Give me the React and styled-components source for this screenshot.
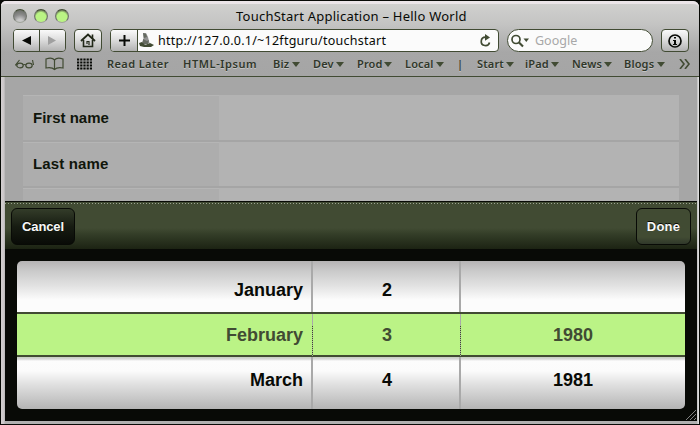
import React from 'react';
import styled, { createGlobalStyle } from 'styled-components';

const ink = '#414b33';
const black = '#080a06';
const lucida = '"Noto Sans", "Open Sans", sans-serif';

const GlobalStyle = createGlobalStyle`
  * { box-sizing: border-box; }
  body { margin: 0; overflow: hidden; background: #000; }
`;

const Frame = styled.div`
  width: 700px;
  height: 425px;
  padding: 1px;
  background: ${black};
`;

const Window = styled.div`
  height: 423px;
  width: 698px;
  padding: 0 1px 3px 4px;
  border-radius: 5px 6px 0 0;
  background: linear-gradient(90deg, #d3cfd0 0, #cac6c8 3px, #b0b0b0 4px, #b0b0b0 696px, #dcdcdc 697px);
  display: flex;
  flex-direction: column;
`;

const Chrome = styled.div`
  height: 76px;
  flex: none;
  margin-left: -4px;
  padding-left: 4px;
  margin-right: -1px;
  border-top: 3px solid #ebe5e8;
  border-bottom: 1px solid ${ink};
  border-radius: 5px 6px 0 0;
  background: linear-gradient(#d0d0ce, #c4c4c3 20px, #a7a7a7 48px, #a5a5a5);
  display: flex;
  flex-direction: column;
`;

const TitleBar = styled.div`
  height: 25px;
  flex: none;
  display: grid;
  grid-template-columns: 231px 232px 1fr;
  align-items: center;
`;

const Lights = styled.div`
  display: flex;
  gap: 7px;
  padding: 0 0 1px 8px;
`;

const Light = styled.i`
  width: 14px;
  height: 14px;
  border-radius: 50%;
  border: 1.5px solid;
  border-color: ${ink} #70746c #a0a59b;
  background: ${p => p.$off
    ? 'radial-gradient(circle at 50% 100%, #c8c8c8 20%, #8b8b8b 55%, #62665e)'
    : 'radial-gradient(circle at 50% 62%, #baf484 52%, #6c7e58 75%)'};
`;

const Title = styled.div`
  font: 13px ${lucida};
  letter-spacing: ${p => p.$track}px;
  color: ${black};
  white-space: nowrap;
  line-height: 18px;
  padding-bottom: 2px;
`;

const ToolRow = styled.div`
  height: 23px;
  flex: none;
  display: flex;
  align-items: flex-start;
  padding-left: 8px;
`;

const Control = styled.div`
  height: 23px;
  width: ${p => p.$w}px;
  margin-right: ${p => p.$gap}px;
  border: 1px solid ${ink};
  border-radius: ${p => p.$pill ? 12 : 4}px;
  background: ${p => p.$field ? '#fbfbfb' : 'linear-gradient(#fafafa, #dedede 45%, #b2b2b2)'};
  display: flex;
  align-items: center;
  justify-content: ${p => p.$field ? 'flex-start' : 'center'};
  overflow: hidden;
`;

const Segment = styled.div`
  width: ${p => p.$w}px;
  height: 21px;
  flex: none;
  display: flex;
  align-items: center;
  justify-content: center;
  background: linear-gradient(#fafafa, #dedede 45%, #b2b2b2);
  border-right: ${p => p.$divide ? 1 : 0}px solid ${ink};
`;

const FieldText = styled.div`
  font: 12.5px/20px ${lucida};
  letter-spacing: ${p => p.$track}px;
  color: ${p => p.$muted ? '#a8a8a8' : black};
  white-space: nowrap;
  flex: 1;
  padding-left: ${p => p.$pad}px;
`;

const Bookmarks = styled.div`
  height: 24px;
  flex: none;
  display: flex;
  align-items: center;
  padding-left: 9px;
  svg { flex: none; }
`;

const Bookmark = styled.div`
  width: ${p => p.$w}px;
  flex: none;
  display: flex;
  align-items: center;
  gap: 2px;
  white-space: nowrap;
  font: 600 11px/16px ${lucida};
  letter-spacing: ${p => p.$track || 0}px;
  color: #30372a;
  text-shadow: 0 1px #c4c4c4;
`;

const Label = styled.span`
  width: ${p => p.$w}px;
  flex: none;
`;

const Page = styled.div`
  width: 692px;
  height: 124px;
  flex: none;
  padding: 18px 18px 0;
  background: #a6a6a6;
  overflow: hidden;
`;

const FormRow = styled.div`
  height: ${p => p.$first ? 47 : 46}px;
  border-bottom: 2px solid #a5a5a5;
  display: grid;
  grid-template-columns: 196px 1fr;
  background: #b3b3b3;
`;

const FormLabel = styled.div`
  padding-left: 10px;
  background: #adadad;
  border-top: 1px solid #b5b5b5;
  color: #10160b;
  font: bold 15px/${p => p.$first ? 44 : 42}px "Liberation Sans", Arial, sans-serif;
  letter-spacing: ${p => p.$first ? 0 : 0.15}px;
`;

const Sheet = styled.div`
  width: 692px;
  height: 220px;
  flex: none;
  background: ${black};
`;

const SheetBar = styled.div`
  height: 48px;
  display: flex;
  justify-content: space-between;
  padding: 5px 6px 0;
  border-top: 1px solid ${black};
  background:
    repeating-linear-gradient(90deg, #9ba391 0 1px, ${ink} 1px 3px) 0 1px / 100% 1px no-repeat,
    linear-gradient(${ink} 26px, #343e28 32px, #1c2313);
`;

const SheetButton = styled.div`
  width: ${p => p.$w}px;
  height: 37px;
  margin-top: 1px;
  border: 1px solid ${black};
  border-radius: 6px;
  background: ${p => p.$primary
    ? `linear-gradient(${ink} 28px, #30382a)`
    : 'linear-gradient(#333c29, #171c12 50%, #090b07)'};
  color: #f8f8f8;
  text-align: center;
  font: bold 13px/36px "Liberation Sans", Arial, sans-serif;
  letter-spacing: ${p => p.$primary ? 0.2 : -0.1}px;
  text-shadow: 0 -1px ${black};
`;

const Picker = styled.div`
  height: 148px;
  margin: 12px 12px 0;
  border-radius: 5px;
  overflow: hidden;
  display: grid;
  grid-template-rows: 51px 45px 52px;
`;

const PickerRow = styled.div`
  display: grid;
  grid-template-columns: 296px 148px 1fr;
  color: ${p => p.$active ? ink : black};
  border: solid ${ink};
  border-width: ${p => p.$active ? '2px 0' : 0};
  background: ${p => ({
    top: 'linear-gradient(#b5b3b4, #cacaca 10px, #e2e2e2 25px, #fcfcfc 39px)',
    middle: '#bbf386',
    bottom: 'linear-gradient(#c6cec0 0, #d7d7d7 2px, #fcfcfc 4px, #fbfbfb 14px, #e1e1e1 27px, #cacaca 40px, #b4b4b4)',
  })[p.$tone]};
`;

const PickerCell = styled.div`
  font: bold 18px/${p => p.$line}px "Liberation Sans", Arial, sans-serif;
  text-align: ${p => p.$right ? 'right' : 'center'};
  padding-right: ${p => p.$right ? 10 : 0}px;
  background: ${p => ({
    0: 'none',
    1: `linear-gradient(#a9a9a9, #a9a9a9) 100% 0 / 1px 11px no-repeat,
        repeating-linear-gradient(${ink} 0 1px, #a9b99a 1px 2px) 100% 0 / 1px 100% no-repeat`,
    2: 'linear-gradient(#a9a9a9, #a9a9a9) 100% 0 / 2px 100% no-repeat',
  })[p.$rule]};
`;

const ResizeGrip = styled.div`
  height: 12px;
  display: flex;
  justify-content: flex-end;
`;

const Chevron = () => (
  <svg width="8" height="5" viewBox="0 0 8 5"><path d="M0 0h8L4 5z" fill={ink} /></svg>
);

const menus = [
  ['Biz', 40, 17], ['Dev', 44, 21], ['Prod', 48, 25], ['Local', 52, 29], ['|', 20, 3],
  ['Start', 48, 27], ['iPad', 47, 24], ['News', 52, 30], ['Blogs', 55, 31],
];

const rows = [
  ['top', 'January', '2', '', 58],
  ['middle', 'February', '3', '1980', 42],
  ['bottom', 'March', '4', '1981', 46],
];

export default function App() {
  return (
    <Frame>
      <GlobalStyle />
      <Window>
        <Chrome>
          <TitleBar>
            <Lights><Light $off /><Light /><Light /></Lights>
            <Title $track={0.24}>TouchStart Application – Hello World</Title>
          </TitleBar>
          <ToolRow>
            <Control $w={53} $gap={8}>
              <Segment $w={26} $divide>
                <svg width="10" height="9" viewBox="0 0 10 9"><path d="M9 0v9L0 4.5z" fill={black} /></svg>
              </Segment>
              <Segment $w={25}>
                <svg width="9" height="9" viewBox="0 0 9 9"><path d="M0 0v9l8-4.5z" fill="#a0a0a0" /></svg>
              </Segment>
            </Control>
            <Control $w={28} $gap={8}>
              <svg width="16" height="15" viewBox="0 0 16 15" fill="none" stroke="#222819">
                <path d="M1 8l7-6.5L15 8" strokeWidth="1.9" />
                <path d="M3.500 7v6.500h9V7M12.500 5.500V1.500" strokeWidth="1.600" />
                <path d="M7 11V8.500h2v3.500" strokeWidth="1.200" />
              </svg>
            </Control>
            <Control $w={389} $gap={8} $field>
              <Segment $w={27} $divide>
                <svg width="11" height="11" viewBox="0 0 11 11"><path d="M5.5 0v11M0 5.5h11" stroke={black} strokeWidth="2" /></svg>
              </Segment>
              <svg width="17" height="17" viewBox="0 0 17 17">
                <path d="M5 1h3l2 4 1.500 6-5 2-3-2 2-4z" fill="#929292" />
                <path d="M5 1l3 1 1 3-3 1zM5 7l4 2 2-1-1 4H5z" fill="#656a60" />
                <path d="M1 11l3-1 3 3 5-2 4 2-3 2H6l-4-1z" fill={ink} />
              </svg>
              <FieldText $pad={3} $track={0.26}>http://127.0.0.1/~12ftguru/touchstart</FieldText>
              <svg width="21" height="14" viewBox="0 0 21 14">
                <path d="M12.500 8.500a4.200 4.200 0 1 1-4-5.300" fill="none" stroke={ink} strokeWidth="1.700" />
                <path d="M8 0l5 3.500-5 3.200z" fill={ink} />
              </svg>
            </Control>
            <Control $w={146} $gap={8} $field $pill>
              <svg width="21" height="14" viewBox="0 0 21 14">
                <circle cx="8" cy="5.500" r="4" fill="none" stroke={ink} strokeWidth="1.700" />
                <path d="M11 8.500l4 4" stroke={ink} strokeWidth="2.200" />
                <path d="M15.500 4.500h5.500l-2.700 3.500z" fill={ink} />
              </svg>
              <FieldText $pad={6} $muted $track={0}>Google</FieldText>
            </Control>
            <Control $w={28} $gap={0}>
              <svg width="14" height="14" viewBox="0 0 14 14">
                <circle cx="7" cy="7" r="6" fill="none" stroke={black} strokeWidth="1.700" />
                <path d="M6 3h2v1.600H6zM5 6h3v4h1v1H5v-1h1V7H5z" fill={black} />
              </svg>
            </Control>
          </ToolRow>
          <Bookmarks>
            <svg width="93" height="14" viewBox="0 0 93 14" fill="none" stroke={ink} strokeWidth="1.200">
              <path d="M1.500 8l4-5M19.500 8l-1-5M9 8q1.500-1 3 0M1 8h2" />
              <ellipse cx="6" cy="8.500" rx="3.200" ry="2.300" />
              <ellipse cx="15" cy="8.500" rx="3.200" ry="2.300" />
              <path d="M32 2q6-2 8.500 1Q43 0 49 2v9q-6-1-8.500 1.500Q38 10 32 11zM40.500 3v9" />
              <path d="M63 2.500h15M63 5.500h15M63 8.500h15M63 11.500h15" stroke={black} strokeWidth="1.800" strokeDasharray="2.200 1" />
            </svg>
            <Bookmark $w={76} $track={0.4}>Read Later</Bookmark>
            <Bookmark $w={90} $track={0.6}>HTML-Ipsum</Bookmark>
            {menus.map(([name, width, label]) => (
              <Bookmark key={name} $w={width} $track={0.15}>
                <Label $w={label}>{name}</Label>
                {name !== '|' && <Chevron />}
              </Bookmark>
            ))}
            <svg width="12" height="10" viewBox="0 0 12 10"><path d="M1 0l4 5-4 5M6 0l4 5-4 5" fill="none" stroke={ink} strokeWidth="1.600" /></svg>
          </Bookmarks>
        </Chrome>
        <Page>
          {['First name', 'Last name', ''].map((name, index) => (
            <FormRow key={name} $first={index === 0}>
              <FormLabel $first={index === 0}>{name}</FormLabel>
            </FormRow>
          ))}
        </Page>
        <Sheet>
          <SheetBar>
            <SheetButton $w={64}>Cancel</SheetButton>
            <SheetButton $w={55} $primary>Done</SheetButton>
          </SheetBar>
          <Picker>
            {rows.map(([tone, month, day, year, line]) => {
              const rule = tone === 'middle' ? 1 : 2;
              return (
                <PickerRow key={tone} $tone={tone} $active={tone === 'middle'}>
                  <PickerCell $right $line={line} $rule={rule}>{month}</PickerCell>
                  <PickerCell $line={line} $rule={rule}>{day}</PickerCell>
                  <PickerCell $line={line} $rule={0}>{year}</PickerCell>
                </PickerRow>
              );
            })}
          </Picker>
          <ResizeGrip>
            <svg width="12" height="12" viewBox="0 0 12 12"><path d="M1 11L11 1M5 11l6-6M9 11l2-2" stroke="#a0a0a0" strokeWidth=".8" /></svg>
          </ResizeGrip>
        </Sheet>
      </Window>
    </Frame>
  );
}
